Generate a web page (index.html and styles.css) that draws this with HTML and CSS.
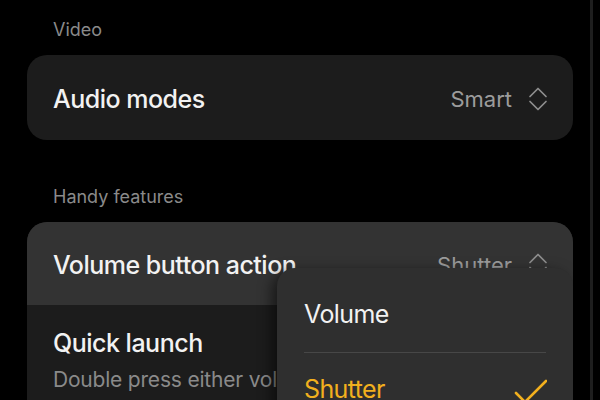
FILE: index.html
```html
<!DOCTYPE html>
<html>
<head>
<meta charset="utf-8">
<link rel="stylesheet" href="styles.css">
</head>
<body>
<div class="screen">
  <div class="content">
    <div class="section-label first">Video</div>
    <div class="card">
      <div class="row">
        <span class="title">Audio modes</span>
        <span class="value">Smart</span>
        <svg class="updown" viewBox="0 0 20 26" width="20" height="26"><path d="M2 10.5 L10 2.5 L18 10.5 M2 15.5 L10 23.5 L18 15.5" fill="none" stroke="#8e8e8e" stroke-width="1.7" stroke-linecap="round" stroke-linejoin="round"/></svg>
      </div>
    </div>
    <div class="section-label">Handy features</div>
    <div class="card tall">
      <div class="row active">
        <span class="title">Volume button action</span>
        <span class="value">Shutter</span>
        <svg class="updown" viewBox="0 0 20 26" width="20" height="26"><path d="M2 10.5 L10 2.5 L18 10.5 M2 15.5 L10 23.5 L18 15.5" fill="none" stroke="#8e8e8e" stroke-width="1.7" stroke-linecap="round" stroke-linejoin="round"/></svg>
      </div>
      <div class="row-multi">
        <div class="title">Quick launch</div>
        <div class="subtitle">Double press either volume button to launch camera</div>
      </div>
    </div>
  </div>
  <div class="edge"></div>
  <div class="popup">
    <div class="option">Volume</div>
    <div class="divider"></div>
    <div class="option selected">
      <span>Shutter</span>
      <svg class="check" viewBox="0 0 33 26" width="33" height="26"><path d="M2 14 L11 23 L32 2" fill="none" stroke="#f2b01e" stroke-width="2.6" stroke-linecap="round" stroke-linejoin="round"/></svg>
    </div>
  </div>
</div>
</body>
</html>
```
FILE: styles.css
```css
html, body {
  margin: 0;
  padding: 0;
  background: #000;
}
body {
  width: 600px;
  height: 400px;
  overflow: hidden;
  font-family: Inter, "Noto Sans", sans-serif;
}
.screen {
  position: relative;
  display: flex;
  width: 600px;
  height: 400px;
  overflow: hidden;
}
.content {
  width: 546px;
  padding: 18px 17px 0 27px;
  flex: none;
}
.edge {
  width: 3px;
  flex: none;
  background: #1e1e1e;
}
.section-label {
  font-size: 18px;
  line-height: 24px;
  color: #8a8a8a;
  padding-left: 26px;
  margin: 45px 0 13px;
}
.section-label.first {
  margin-top: 0;
}
.card {
  background: #1c1c1c;
  border-radius: 20px;
  overflow: hidden;
}
.card.tall {
  height: 260px;
}
.row {
  height: 85px;
  box-sizing: border-box;
  padding: 3px 25px 0 26px;
  display: flex;
  align-items: center;
}
.row.active {
  height: 83px;
  background: #333333;
}
.title {
  font-size: 25px;
  line-height: 30px;
  font-weight: 500;
  letter-spacing: -0.5px;
  color: #f2f2f2;
  white-space: nowrap;
}
.row .title {
  flex: 1;
}
.value {
  font-size: 22px;
  line-height: 30px;
  color: #9c9c9c;
  margin-right: 16px;
}
.updown {
  display: block;
  margin-top: -1px;
}
.row-multi {
  padding: 23px 25px 0 26px;
}
.subtitle {
  font-size: 21px;
  line-height: 28px;
  letter-spacing: -0.2px;
  color: #8a8a8a;
  margin-top: 8px;
  white-space: nowrap;
}
.popup {
  position: absolute;
  left: 277px;
  top: 268px;
  width: 296px;
  height: 200px;
  background: #2f2f2f;
  border-radius: 18px 18px 0 0;
  box-shadow: -5px 4px 14px rgba(0, 0, 0, 0.55);
  padding: 31px 27px 0;
  box-sizing: border-box;
}
.option {
  font-size: 25px;
  line-height: 30px;
  letter-spacing: -0.6px;
  color: #f2f2f2;
  display: flex;
  justify-content: space-between;
  align-items: flex-start;
}
.option.selected {
  color: #f2b01e;
  margin-top: 21px;
}
.divider {
  height: 1px;
  background: #474747;
  margin-top: 23px;
}
.check {
  display: block;
  margin-top: 5px;
  margin-right: -1px;
}
```
